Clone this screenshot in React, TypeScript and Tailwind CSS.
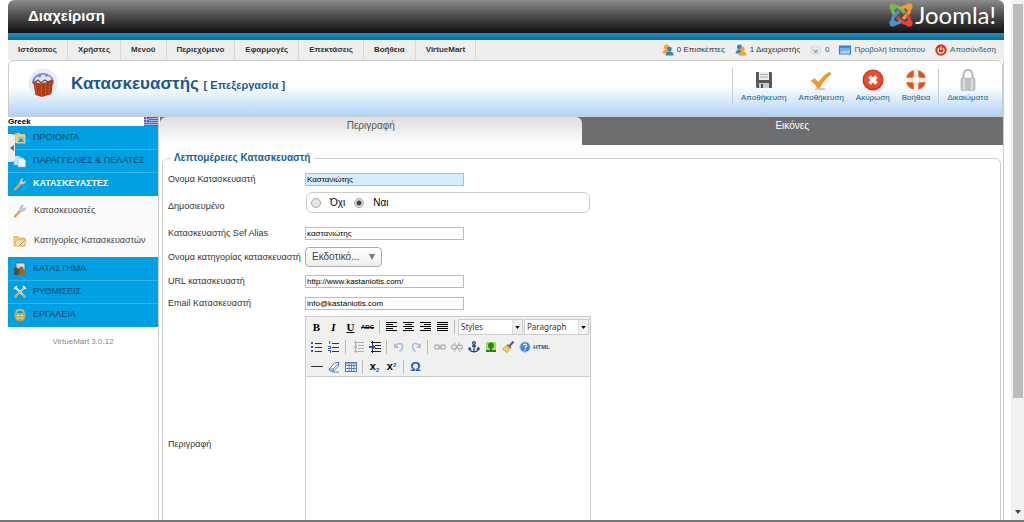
import { useState } from 'react';
import type { ReactNode } from 'react';

const menuItems = [
  'Ιστότοπος',
  'Χρήστες',
  'Μενού',
  'Περιεχόμενο',
  'Εφαρμογές',
  'Επεκτάσεις',
  'Βοήθεια',
  'VirtueMart',
];

function JoomlaMark() {
  const arms = [
    { color: '#7ab942', turn: 0 },
    { color: '#f59a2c', turn: 90 },
    { color: '#ee4035', turn: 180 },
    { color: '#4f91cd', turn: 270 },
  ];
  return (
    <svg viewBox="0 0 24 24" className="size-6" aria-hidden="true">
      {arms.map(arm => (
        <g key={arm.color} transform={`rotate(${arm.turn} 12 12)`} stroke={arm.color} fill="none" strokeWidth="3.2">
          <path d="M4 4C8 2.500 10.500 4.500 12 6L16 10" />
          <path d="M4 4C2.500 8 4.500 10.500 6 12" />
          <circle cx="3.800" cy="3.800" r="3.400" fill={arm.color} stroke="none" />
        </g>
      ))}
    </svg>
  );
}

function Users({ flip = false }: { flip?: boolean }) {
  const back = flip ? '#2f86b5' : '#f3a32b';
  const front = flip ? '#f3a32b' : '#2f86b5';
  return (
    <svg viewBox="0 0 12 12" className="size-3" aria-hidden="true">
      <circle cx="4.500" cy="3" r="2.500" fill={back} />
      <path d="M0.500 9.500C1 6 3 5 5 5.500L8 9.500Z" fill={back} />
      <circle cx="7.500" cy="5" r="2.300" fill={front} />
      <path d="M3.500 11.500C4 8 6 7 8 7.200S11.500 9 11.700 11.500Z" fill={front} />
    </svg>
  );
}

function MailIcon() {
  return (
    <svg viewBox="0 0 12 12" className="size-3" aria-hidden="true">
      <path d="M1 3L9 2L11 8L9 10H2Z" fill="#e4ebf2" stroke="#c3cdd8" strokeWidth="0.700" />
      <path d="M3 5.500L5 7.500L8 5.500M4 8H8" stroke="#7392b0" fill="none" />
    </svg>
  );
}

function ScreenIcon() {
  return (
    <svg viewBox="0 0 12 12" className="size-3" aria-hidden="true">
      <rect x="0.500" y="2" width="11" height="8" fill="#6fb1ee" stroke="#3d77c2" />
      <path d="M1 3H11" stroke="#2f66ad" />
      <path d="M1 8.500C4 6 8 8 11 5.500V9.500H1Z" fill="#a7d2f7" />
    </svg>
  );
}

function PowerIcon() {
  return (
    <svg viewBox="0 0 12 12" className="size-3" aria-hidden="true">
      <circle cx="6" cy="6" r="5.700" fill="#d43a1a" />
      <path d="M4 4A3 3 0 1 0 8 4M6 2.500V6" stroke="#fff" strokeWidth="1.200" fill="none" />
    </svg>
  );
}

function TopBar() {
  return (
    <header>
      <div className="flex h-[33px] items-center justify-between rounded-t-md bg-linear-to-b from-[#8c8c8c] to-[#121212] pr-2 pl-5 text-white">
        <span className="text-[15px] font-bold">Διαχείριση</span>
        <span className="flex items-center gap-0.5 pb-1">
          <JoomlaMark />
          <span className="font-['Lato',sans-serif] text-[24px] leading-6">Joomla!</span>
        </span>
      </div>
      <div className="h-[7px] bg-linear-to-b from-[#1f8fc6] to-[#10689c]" />
      <nav className="flex h-5 items-center justify-between bg-[#eee] text-[8px]">
        <ul className="flex h-full font-bold text-[#333]">
          {menuItems.map(item => (
            <li key={item} className="flex items-center border-r border-[#d8d8d8] px-2.5">
              <a href="#">{item}</a>
            </li>
          ))}
        </ul>
        <ul className="flex items-center gap-2.5 pr-2 text-[#1d5f8a]">
          <li className="flex items-center gap-[3px] text-[#333]">
            <Users />0 Επισκέπτες
          </li>
          <li className="flex items-center gap-[3px] text-[#333]">
            <Users flip />1 Διαχειριστής
          </li>
          <li>
            <a href="#" className="flex items-center gap-[3px]">
              <MailIcon />0
            </a>
          </li>
          <li>
            <a href="#" className="flex items-center gap-[3px]">
              <ScreenIcon />
              Προβολή Ιστοτόπου
            </a>
          </li>
          <li>
            <a href="#" className="flex items-center gap-[3px]">
              <PowerIcon />
              Αποσύνδεση
            </a>
          </li>
        </ul>
      </nav>
    </header>
  );
}

function SaveIcon() {
  return (
    <svg viewBox="0 0 24 24" className="size-6" aria-hidden="true">
      <path d="M5 4H19L20 5V20H5L4 19V4Z" fill="#55585b" />
      <rect x="7" y="4" width="10" height="8" fill="#eceded" />
      <path d="M8 6.500H16M8 9H16" stroke="#a9adb0" />
      <rect x="7" y="15" width="10" height="5" fill="#c9cccd" />
      <rect x="9" y="16" width="2" height="4" fill="#4a4d50" />
    </svg>
  );
}

function CheckIcon() {
  return (
    <svg viewBox="0 0 24 24" className="size-6" aria-hidden="true">
      <ellipse cx="11" cy="21" rx="6" ry="1.200" fill="#c9c9c9" />
      <path d="M2 13L5.500 10.500L9.500 14.500C13 9.500 16 6.500 20.500 4L22 6C17 10 14 14 10.500 20H8.500C7 17 5 15 2 13Z" fill="#f39a23" stroke="#e3841a" strokeWidth="0.500" />
    </svg>
  );
}

function CancelIcon() {
  return (
    <svg viewBox="0 0 24 24" className="size-6" aria-hidden="true">
      <circle cx="12" cy="12" r="10.500" fill="#d9351a" />
      <circle cx="12" cy="11.500" r="9" fill="#e94d2c" />
      <path d="M8.500 8.500L15.500 15.500M15.500 8.500L8.500 15.500" stroke="#fff" strokeWidth="3.600" />
    </svg>
  );
}

function LifebuoyIcon() {
  return (
    <svg viewBox="0 0 24 24" className="size-6" aria-hidden="true">
      <circle cx="12" cy="12" r="7.200" fill="none" stroke="#e2561e" strokeWidth="6" />
      <path d="M12 0V8M12 16V24M0 12H8M16 12H24" stroke="#f4f4f4" strokeWidth="4.500" />
      <circle cx="12" cy="12" r="4" fill="#fff" stroke="#cf9c83" strokeWidth="0.500" />
      <circle cx="12" cy="12" r="10.200" fill="none" stroke="#d8d8d8" strokeWidth="0.500" />
    </svg>
  );
}

function LockIcon() {
  return (
    <svg viewBox="0 0 24 24" className="size-6" aria-hidden="true">
      <path d="M7.500 11V6.500C7.500 0.500 16.500 0.500 16.500 6.500V11" fill="none" stroke="#b9b9b9" strokeWidth="2" />
      <rect x="5" y="10" width="14" height="12.500" rx="1" fill="#c2c2c2" stroke="#a8a8a8" strokeWidth="0.500" />
      <path d="M8 10.500V22M16 10.500V22" stroke="#dcdcdc" strokeWidth="2" />
    </svg>
  );
}

function BasketIcon() {
  return (
    <svg viewBox="0 0 32 32" className="size-8" aria-hidden="true">
      <circle cx="16" cy="15" r="14.500" fill="#eceaf7" />
      <path d="M5 15A11 10 0 0 1 27 15L25 17H7Z" fill="#7b87d8" />
      <path d="M7 15C8 9 11 7 13 10C15 5 18 6 19 9C22 7 25 10 25 15Z" fill="#dfe3ee" />
      <path d="M6 13L14 16L26 12L24.500 26L15 29L8.500 27Z" fill="#b23a12" />
      <path d="M8 15L10 26M14 16L14.500 28M19 15L18.500 27M23 14L22 26" stroke="#d2561f" />
      <path d="M8 14L11 12L14 15L18 12L21 14L25 12" stroke="#5b4a52" strokeWidth="1.200" fill="none" />
    </svg>
  );
}

type ToolButtonProps = {
  label: string;
  children: ReactNode;
};

function ToolButton({ label, children }: ToolButtonProps) {
  return (
    <button className="flex flex-col items-center text-[8px] leading-3 text-[#1d5f8a]">
      {children}
      {label}
    </button>
  );
}

function TitleBar() {
  return (
    <div className="flex h-[57px] items-center justify-between rounded-t-md border border-[#ccc] bg-linear-to-b from-white from-45% to-[#b0d2f5] pr-3.5 pl-[18px]">
      <div className="flex items-center gap-3 pb-2.5">
        <BasketIcon />
        <h1 className="text-[17px] font-bold text-[#175b8e]">
          Κατασκευαστής <small className="text-[11px]">[ Επεξεργασία ]</small>
        </h1>
      </div>
      <div className="flex items-center pb-1.5">
        <div className="flex gap-3 border-x border-[#ccc] px-2">
          <ToolButton label="Αποθήκευση">
            <SaveIcon />
          </ToolButton>
          <ToolButton label="Αποθήκευση">
            <CheckIcon />
          </ToolButton>
          <ToolButton label="Ακύρωση">
            <CancelIcon />
          </ToolButton>
          <ToolButton label="Βοήθεια">
            <LifebuoyIcon />
          </ToolButton>
        </div>
        <div className="pl-2">
          <ToolButton label="Δικαιώματα">
            <LockIcon />
          </ToolButton>
        </div>
      </div>
    </div>
  );
}

function BoxIcon() {
  return (
    <svg viewBox="0 0 14 14" className="size-3.5 shrink-0" aria-hidden="true">
      <path d="M1 3L6 1.500L8 3H12V12H1Z" fill="#e6c46b" />
      <rect x="4" y="5" width="8" height="7" fill="#9cc4a3" stroke="#f4f0d8" strokeWidth="0.700" />
      <path d="M5 11L8 7L11 11Z" fill="#4c8f7c" />
    </svg>
  );
}

function PagesIcon() {
  return (
    <svg viewBox="0 0 14 14" className="size-3.5 shrink-0" aria-hidden="true">
      <path d="M1 2H6L8 4V11H1Z" fill="#cfe6f5" stroke="#8db9d6" strokeWidth="0.700" />
      <path d="M5 4H10L12.500 6.500V13H5Z" fill="#eef7fd" stroke="#8db9d6" strokeWidth="0.700" />
    </svg>
  );
}

function WrenchIcon() {
  return (
    <svg viewBox="0 0 14 14" className="size-3.5 shrink-0" aria-hidden="true">
      <path d="M2 12.500L7.500 6.500" stroke="#e0a545" strokeWidth="2.500" strokeLinecap="round" />
      <path d="M7 5C6.500 3 8 1.200 10.500 1.500L9 3.500L10.500 5L12.700 3.500C13 6 11 7.700 9 7L7.500 8L6 6.500Z" fill="#c9d3dc" stroke="#8696a4" strokeWidth="0.500" />
    </svg>
  );
}

function FolderIcon() {
  return (
    <svg viewBox="0 0 14 14" className="size-3.5 shrink-0" aria-hidden="true">
      <path d="M1 2.500H5L6 4H12V12H1Z" fill="#f3cf85" stroke="#d6a750" strokeWidth="0.700" />
      <path d="M3.500 6H13L11 12H1.500Z" fill="#fbe4b0" stroke="#d6a750" strokeWidth="0.700" />
      <path d="M7 11L11.500 6.500" stroke="#a98a5a" />
    </svg>
  );
}

function ShopIcon() {
  return (
    <svg viewBox="0 0 14 14" className="size-3.5 shrink-0" aria-hidden="true">
      <rect x="3" y="1" width="9" height="8" fill="#cfe0e6" stroke="#3b5560" strokeWidth="0.700" />
      <path d="M1 6L5 4L7 8L6 13H1Z" fill="#4a5248" />
      <path d="M6 6L9 4L12 9L13 13H7Z" fill="#8b6c3c" />
      <circle cx="5" cy="5" r="1.500" fill="#e2c28a" />
    </svg>
  );
}

function ToolsIcon() {
  return (
    <svg viewBox="0 0 14 14" className="size-3.5 shrink-0" aria-hidden="true">
      <path d="M2 2L12 12" stroke="#d8e2e8" strokeWidth="2.200" />
      <path d="M12 2L2 12" stroke="#b9c9d3" strokeWidth="2.200" />
      <path d="M7 7L2 12.500M9 9L12.500 12.500" stroke="#cda45a" strokeWidth="1.500" />
      <path d="M1 4L4 1M10 1L13 4" stroke="#eef2f4" strokeWidth="1.500" />
    </svg>
  );
}

function CrateIcon() {
  return (
    <svg viewBox="0 0 14 14" className="size-3.5 shrink-0" aria-hidden="true">
      <path d="M3 5C3 0.500 11 0.500 11 5" fill="none" stroke="#d9c27b" strokeWidth="1.500" />
      <path d="M1 5H13L11.500 12L7 13.500L2.500 12Z" fill="#c09a48" />
      <path d="M2 7.500H12M2.500 10H11.500M5 5V12.500M9 5V12.500" stroke="#f0dfa3" strokeWidth="0.700" />
    </svg>
  );
}

function SideItem({ icon, children, active = false }: { icon: ReactNode; children: ReactNode; active?: boolean }) {
  return (
    <li className="border-b border-[#36b2e6] last:border-b-0">
      <a
        href="#"
        className={`flex h-[22px] items-center gap-1.5 pl-[5px] text-[9px] whitespace-nowrap ${
          active ? 'font-bold text-white' : 'text-[#0b4560]'
        }`}
      >
        {icon}
        {children}
      </a>
    </li>
  );
}

function Sidebar() {
  return (
    <aside className="relative w-[151px] shrink-0 border-r border-[#ccc] bg-white">
      <div className="flex h-[9px] items-center justify-between text-[8px] leading-[9px] font-bold">
        Greek
        <svg viewBox="0 0 14 9" className="h-[9px] w-3.5" aria-hidden="true">
          <rect width="14" height="9" fill="#5a5fae" />
          <path d="M5 1.500H14M5 3.500H14M0 5.500H14M0 7.500H14M2.500 0V4.500M0 2.500H5" stroke="#c9cbee" strokeWidth="0.800" />
        </svg>
      </div>
      <ul className="bg-[#00a0e3] py-px">
        <SideItem icon={<BoxIcon />}>ΠΡΟΙΟΝΤΑ</SideItem>
        <SideItem icon={<PagesIcon />}>ΠΑΡΑΓΓΕΛΙΕΣ &amp; ΠΕΛΑΤΕΣ</SideItem>
        <SideItem icon={<WrenchIcon />} active>
          ΚΑΤΑΣΚΕΥΑΣΤΕΣ
        </SideItem>
      </ul>
      <ul className="bg-[#fafafa] pb-px text-[9px] whitespace-nowrap text-[#444]">
        <li>
          <a href="#" className="flex h-[30px] items-center gap-[7px] pl-[5px]">
            <WrenchIcon />
            Κατασκευαστές
          </a>
        </li>
        <li>
          <a href="#" className="flex h-[30px] items-center gap-[7px] pl-[5px]">
            <FolderIcon />
            Κατηγορίες Κατασκευαστών
          </a>
        </li>
      </ul>
      <ul className="bg-[#00a0e3] py-px">
        <SideItem icon={<ShopIcon />}>ΚΑΤΑΣΤΗΜΑ</SideItem>
        <SideItem icon={<ToolsIcon />}>ΡΥΘΜΙΣΕΙΣ</SideItem>
        <SideItem icon={<CrateIcon />}>ΕΡΓΑΛΕΙΑ</SideItem>
      </ul>
      <p className="mt-[9px] text-center text-[8px] text-[#888]">VirtueMart 3.0.12</p>
      <button
        aria-label="Απόκρυψη μενού"
        className="absolute top-[17px] left-0 flex h-7 w-[7px] items-center justify-center rounded-r-sm bg-[#eee] text-[#666]"
      >
        <svg viewBox="0 0 4 6" className="h-1.5 w-1">
          <path d="M4 0V6L0 3Z" fill="currentColor" />
        </svg>
      </button>
    </aside>
  );
}

function Lines({ rows }: { rows: [number, number][] }) {
  return (
    <svg viewBox="0 0 12 12" className="size-3" shapeRendering="crispEdges">
      {rows.map(([x, w], i) => (
        <rect key={i} x={x} y={1 + i * 2} width={w} height="1" fill="currentColor" />
      ))}
    </svg>
  );
}

function ListIcon({ ordered = false }: { ordered?: boolean }) {
  return (
    <svg viewBox="0 0 12 12" className="size-3" shapeRendering="crispEdges">
      <path d="M4 2.500H11M4 6.500H11M4 10.500H11" stroke="#333" />
      {ordered ? (
        <path d="M1.500 0V3M0 5H2V7M0 7.500H3M0 9.500H2V12" stroke="#3a5da8" fill="none" />
      ) : (
        <path d="M0 2H2M0 6H2M0 10H2" stroke="#3a5da8" strokeWidth="2" />
      )}
    </svg>
  );
}

function IndentIcon({ out = false }: { out?: boolean }) {
  return (
    <svg viewBox="0 0 12 12" className={`size-3 ${out ? 'opacity-30' : ''}`}>
      <path d="M2 1.500H12M6 4.500H12M6 7.500H12M2 10.500H12M3.500 0V12" stroke="#222" />
      <path d={out ? 'M5 3.500V8.500L1 6Z' : 'M0 5H3V3L7 6L3 9V7H0Z'} fill="#2b4f9e" />
    </svg>
  );
}

function UndoIcon({ flip = false }: { flip?: boolean }) {
  return (
    <svg viewBox="0 0 12 12" className={`size-3 opacity-40 ${flip ? '-scale-x-100' : ''}`}>
      <path d="M2.500 5C5 1 10.500 2 9.500 6.500C9 8.500 8 9.500 6.500 10.500" stroke="#3f6fc0" strokeWidth="1.600" fill="none" />
      <path d="M1 2V7H6Z" fill="#3f6fc0" />
    </svg>
  );
}

function LinkIcon({ broken = false }: { broken?: boolean }) {
  return (
    <svg viewBox="0 0 12 12" className="size-3 opacity-40" fill="none" stroke="#555">
      <rect x="0.500" y="4" width="5" height="4" rx="2" strokeWidth="1.300" />
      <rect x="6.500" y="4" width="5" height="4" rx="2" strokeWidth="1.300" />
      {broken ? <path d="M3 11L9 1M3 1L4.500 3M7.500 9L9 11" /> : <path d="M4 6H8" />}
    </svg>
  );
}

function AnchorIcon() {
  return (
    <svg viewBox="0 0 12 12" className="size-3" fill="none" stroke="#1f4385" strokeWidth="1.300">
      <circle cx="6" cy="2" r="1.300" />
      <path d="M6 3.500V11M4 5H8M1.500 7C1.500 12 10.500 12 10.500 7M0.500 8.500L1.500 6.800L3 8.500M9 8.500L10.500 6.800L11.500 8.500" />
    </svg>
  );
}

function TreeIcon() {
  return (
    <svg viewBox="0 0 12 12" className="size-3">
      <rect x="1" y="1" width="10" height="10" fill="#9fe05c" />
      <circle cx="6" cy="4.500" r="3" fill="#2a8a22" />
      <path d="M6 6V10" stroke="#5b4a1c" strokeWidth="1.500" />
      <path d="M1 10H11" stroke="#2a7b2d" strokeWidth="2" />
    </svg>
  );
}

function BroomIcon() {
  return (
    <svg viewBox="0 0 12 12" className="size-3">
      <path d="M11.500 0.500L7.500 5" stroke="#3a5aa5" strokeWidth="2" />
      <path d="M6 3.500L9 6.500L5 11.500L0.500 8Z" fill="#efd26a" stroke="#9b7b2a" strokeWidth="0.600" />
      <path d="M5.500 4L8.500 7" stroke="#b04b32" strokeWidth="1.500" />
    </svg>
  );
}

function HelpIcon() {
  return (
    <svg viewBox="0 0 12 12" className="size-3">
      <circle cx="6" cy="6" r="5.200" fill="#3f7fd6" stroke="#b8cfee" />
      <path d="M4.300 4.700C4.300 2.500 7.700 2.500 7.700 4.700C7.700 5.800 6 5.900 6 7.300M6 8.300V9.600" stroke="#fff" strokeWidth="1.200" fill="none" />
    </svg>
  );
}

function EraserIcon() {
  return (
    <svg viewBox="0 0 12 12" className="size-3">
      <path d="M1 8L7 1.500H11L10 5.500L5.500 10H2Z" fill="#fff" stroke="#3f66b0" strokeWidth="0.900" />
      <path d="M1 8H5L10.500 2.500M5 8V10M4 11H11" stroke="#3f66b0" strokeWidth="0.800" fill="none" />
    </svg>
  );
}

function GridIcon() {
  return (
    <svg viewBox="0 0 12 12" className="size-3">
      <rect x="0.500" y="1.500" width="11" height="9" fill="#fff" stroke="#4f74b8" />
      <path d="M1 4.500H11M1 7.500H11M4 2V10M6.500 2V10M9 2V10" stroke="#4f74b8" strokeWidth="0.900" />
      <path d="M1 2.500H11" stroke="#8fa9da" strokeWidth="1.500" />
    </svg>
  );
}

function EditorButton({ label, children }: { label: string; children: ReactNode }) {
  return (
    <button type="button" aria-label={label} className="flex h-5 w-[17px] items-center justify-center text-[11px] text-black">
      {children}
    </button>
  );
}

function Separator() {
  return <span className="mx-[3px] h-3.5 w-px bg-[#bbb]" />;
}

function EditorSelect({ label }: { label: string }) {
  return (
    <span className="flex h-4 w-[65px] items-center border border-[#ccc] bg-white">
      <select
        aria-label={label}
        className="h-full min-w-0 flex-1 appearance-none pl-0.5 font-['Noto_Sans',sans-serif] text-[8px] leading-3"
      >
        <option>{label}</option>
      </select>
      <span className="flex h-full w-2.5 items-center justify-center border-l border-[#ddd] bg-[#f0f0ee]">
        <svg viewBox="0 0 6 4" className="h-[3px] w-[5px]" aria-hidden="true">
          <path d="M0 0H6L3 4Z" />
        </svg>
      </span>
    </span>
  );
}

function RichEditor() {
  return (
    <div className="w-[286px] border border-[#ccc]">
      <div className="border-b border-[#ccc] bg-[#f0f0ee] pl-0.5">
        <div className="flex h-5 items-center">
          <EditorButton label="Έντονα">
            <b className="font-['Liberation_Serif',serif]">B</b>
          </EditorButton>
          <EditorButton label="Πλάγια">
            <b className="font-['Liberation_Serif',serif] italic">I</b>
          </EditorButton>
          <EditorButton label="Υπογράμμιση">
            <b className="font-['Liberation_Serif',serif] underline">U</b>
          </EditorButton>
          <EditorButton label="Διαγραφή">
            <b className="text-[6px] line-through">ABC</b>
          </EditorButton>
          <Separator />
          <EditorButton label="Στοίχιση αριστερά">
            <Lines rows={[[0, 11], [0, 7], [0, 11], [0, 7], [0, 11]]} />
          </EditorButton>
          <EditorButton label="Στοίχιση στο κέντρο">
            <Lines rows={[[0, 11], [2, 7], [0, 11], [2, 7], [0, 11]]} />
          </EditorButton>
          <EditorButton label="Στοίχιση δεξιά">
            <Lines rows={[[0, 11], [4, 7], [0, 11], [4, 7], [0, 11]]} />
          </EditorButton>
          <EditorButton label="Πλήρης στοίχιση">
            <Lines rows={[[0, 11], [0, 11], [0, 11], [0, 11], [0, 11]]} />
          </EditorButton>
          <Separator />
          <div className="flex gap-px">
            <EditorSelect label="Styles" />
            <EditorSelect label="Paragraph" />
          </div>
        </div>
        <div className="flex h-5 items-center">
          <EditorButton label="Λίστα">
            <ListIcon />
          </EditorButton>
          <EditorButton label="Αριθμημένη λίστα">
            <ListIcon ordered />
          </EditorButton>
          <Separator />
          <EditorButton label="Μείωση εσοχής">
            <IndentIcon out />
          </EditorButton>
          <EditorButton label="Αύξηση εσοχής">
            <IndentIcon />
          </EditorButton>
          <Separator />
          <EditorButton label="Αναίρεση">
            <UndoIcon />
          </EditorButton>
          <EditorButton label="Επανάληψη">
            <UndoIcon flip />
          </EditorButton>
          <Separator />
          <EditorButton label="Σύνδεσμος">
            <LinkIcon />
          </EditorButton>
          <EditorButton label="Αφαίρεση συνδέσμου">
            <LinkIcon broken />
          </EditorButton>
          <EditorButton label="Άγκυρα">
            <AnchorIcon />
          </EditorButton>
          <EditorButton label="Εικόνα">
            <TreeIcon />
          </EditorButton>
          <EditorButton label="Καθαρισμός">
            <BroomIcon />
          </EditorButton>
          <EditorButton label="Βοήθεια">
            <HelpIcon />
          </EditorButton>
          <EditorButton label="HTML">
            <span className="text-[6px] font-bold text-[#2b4f8e]">HTML</span>
          </EditorButton>
        </div>
        <div className="flex h-[19px] items-center">
          <EditorButton label="Οριζόντια γραμμή">
            <span className="h-px w-3 bg-[#333]" />
          </EditorButton>
          <EditorButton label="Αφαίρεση μορφοποίησης">
            <EraserIcon />
          </EditorButton>
          <EditorButton label="Πίνακας">
            <GridIcon />
          </EditorButton>
          <Separator />
          <EditorButton label="Δείκτης">
            <b>
              x<sub className="text-[6px] text-[#2b4f9e]">2</sub>
            </b>
          </EditorButton>
          <EditorButton label="Εκθέτης">
            <b>
              x<sup className="text-[6px] text-[#2b4f9e]">2</sup>
            </b>
          </EditorButton>
          <Separator />
          <EditorButton label="Σύμβολο">
            <b className="text-[13px] text-[#2f5cb0]">Ω</b>
          </EditorButton>
        </div>
      </div>
      <textarea id="description" className="block h-[194px] w-full resize-none bg-white p-1 outline-none" />
    </div>
  );
}

const labelClass = 'w-[137px] pt-0.5 whitespace-nowrap';
const fieldClass = 'h-[13px] w-[159px] border border-[#bbb] px-px text-[8px] leading-[11px] text-black outline-none';
const radioClass =
  'size-2.5 appearance-none rounded-full border border-[#aaa] bg-[#e6e6e6] checked:bg-[radial-gradient(circle,#444_0_2px,#e0e0e0_3px)]';

function ManufacturerForm() {
  const [published, setPublished] = useState(true);

  return (
    <fieldset className="mx-0.5 rounded-md border border-[#ccc] pb-4 pl-[5px]">
      <legend className="ml-0.5 px-1 text-[10px] leading-3 font-bold text-[#146295]">
        Λεπτομέρειες Κατασκευαστή
      </legend>
      <div className="mt-[5px] text-[9px] text-[#333]">
        <div className="flex h-5 items-center">
          <label htmlFor="name" className={labelClass}>
            Ονομα Κατασκευαστή
          </label>
          <input id="name" defaultValue="Καστανιώτης" className={`${fieldClass} bg-[#d5eeff]`} />
        </div>
        <div className="flex h-[34px] items-center" role="radiogroup" aria-labelledby="published">
          <span id="published" className={labelClass}>
            Δημοσιευμένο
          </span>
          <div className="mt-[3px] ml-px flex h-[21px] w-[284px] items-center gap-[9px] self-start rounded-md border border-[#ccc] pl-1 text-[10px] text-black">
            <label className="flex items-center gap-[9px]">
              <input type="radio" name="published" checked={!published} onChange={() => setPublished(false)} className={radioClass} />
              Όχι
            </label>
            <label className="flex items-center gap-[9px]">
              <input type="radio" name="published" checked={published} onChange={() => setPublished(true)} className={radioClass} />
              Ναι
            </label>
          </div>
        </div>
        <div className="flex h-5 items-center">
          <label htmlFor="alias" className={labelClass}>
            Κατασκευαστής Sef Alias
          </label>
          <input id="alias" defaultValue="καστανιώτης" className={fieldClass} />
        </div>
        <div className="flex h-[27px] items-center">
          <label htmlFor="category" className={labelClass}>
            Ονομα κατηγορίας κατασκευαστή
          </label>
          <span className="flex h-5 w-[77px] items-center rounded-sm border border-[#aaa] bg-linear-to-b from-white to-[#eee] pr-1.5 text-[10px]">
            <select id="category" className="h-full min-w-0 flex-1 appearance-none pl-1.5 text-[#444] outline-none">
              <option>Εκδοτικό...</option>
            </select>
            <svg viewBox="0 0 6 6" className="size-1.5" aria-hidden="true">
              <path d="M0 0H6L3 6Z" fill="#777" />
            </svg>
          </span>
        </div>
        <div className="flex h-[22px] items-center">
          <label htmlFor="url" className={labelClass}>
            URL κατασκευαστή
          </label>
          <input id="url" defaultValue="http://www.kastaniotis.com/" className={fieldClass} />
        </div>
        <div className="flex h-[22px] items-center">
          <label htmlFor="email" className={labelClass}>
            Email Κατασκευαστή
          </label>
          <input id="email" defaultValue="info@kastaniotis.com" className={fieldClass} />
        </div>
        <div className="mt-0.5 flex items-center">
          <label htmlFor="description" className={labelClass}>
            Περιγραφή
          </label>
          <RichEditor />
        </div>
      </div>
    </fieldset>
  );
}

function Tabs() {
  return (
    <div role="tablist" className="grid h-7 grid-cols-2 bg-[#6d6e70] text-[10px]">
      <button
        role="tab"
        aria-selected="true"
        className="rounded-t-md bg-linear-to-b from-[#dedede] to-white pb-3 text-[#555]"
      >
        Περιγραφή
      </button>
      <button role="tab" aria-selected="false" className="pb-3 text-white">
        Εικόνες
      </button>
    </div>
  );
}

function Scrollbar() {
  return (
    <div className="flex w-[13px] flex-col items-center justify-between bg-[#f1f1f1] pt-1 pb-1" aria-hidden="true">
      <div className="h-[77%] w-2.5 bg-[#bcbcbc]" />
      <svg viewBox="0 0 6 4" className="mb-0.5 h-1 w-1.5">
        <path d="M0 0H6L3 4Z" fill="#444" />
      </svg>
    </div>
  );
}

export default function App() {
  return (
    <div className="flex h-screen flex-col overflow-hidden bg-white font-['Liberation_Sans',Arial,sans-serif]">
      <div className="flex min-h-0 flex-1 gap-[7px] overflow-hidden pl-2">
        <div className="flex min-w-0 flex-1 flex-col">
          <TopBar />
          <div className="flex flex-1 flex-col border-r border-[#ccc]">
            <TitleBar />
            <div className="flex flex-1">
              <Sidebar />
              <main className="min-w-0 flex-1 pl-px">
                <Tabs />
                <div className="pt-[7px]">
                  <ManufacturerForm />
                </div>
              </main>
            </div>
          </div>
        </div>
        <Scrollbar />
      </div>
      <div className="h-0.5 bg-[#777]" />
    </div>
  );
}
